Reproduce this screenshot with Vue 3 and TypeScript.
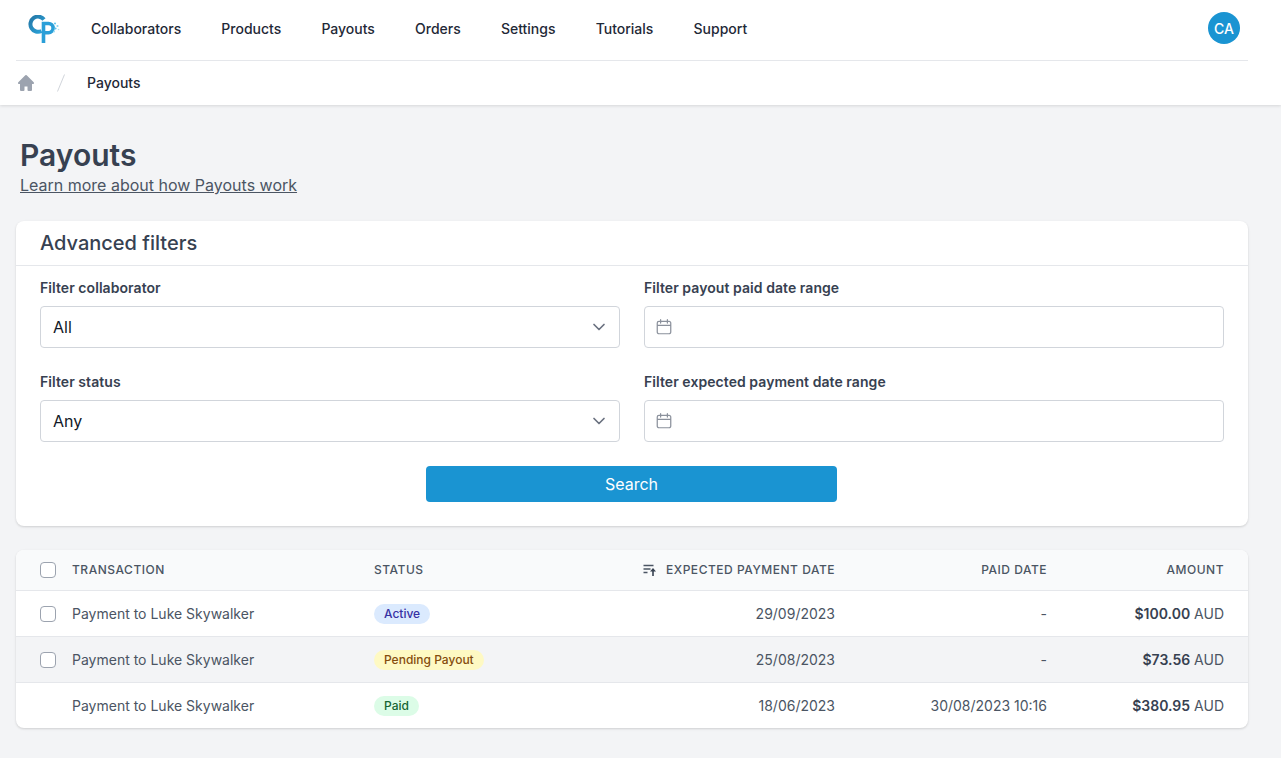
<script setup lang="ts">
interface Row { status: string; tone: string; expected: string; paid: string; amount: string; check: boolean }
const nav: string[] = ['Collaborators', 'Products', 'Payouts', 'Orders', 'Settings', 'Tutorials', 'Support']
const rows: Row[] = [
  { status: 'Active', tone: 'blue', expected: '29/09/2023', paid: '-', amount: '$100.00', check: true },
  { status: 'Pending Payout', tone: 'yellow', expected: '25/08/2023', paid: '-', amount: '$73.56', check: true },
  { status: 'Paid', tone: 'green', expected: '18/06/2023', paid: '30/08/2023 10:16', amount: '$380.95', check: false },
]
</script>

<template>
  <div class="page">
    <header class="top">
      <div class="navrow">
        <svg class="logo" viewBox="0 0 34 28" width="34" height="28" aria-label="logo">
          <defs>
            <linearGradient id="lg" x1="0" y1="0" x2="1" y2="1">
              <stop offset="0" stop-color="#2477a6" />
              <stop offset="1" stop-color="#2ba5dc" />
            </linearGradient>
          </defs>
          <path d="M17 4.5 A7.6 7.6 0 1 0 14.5 16" fill="none" stroke="url(#lg)" stroke-width="4" />
          <path d="M16.5 28 V8.5 H21.5 a4.6 4.6 0 0 1 0 9.2 H16.5" fill="none" stroke="#2a9fd8" stroke-width="3.6" />
          <circle cx="28" cy="8.5" r="1" fill="#5cc3ec" />
          <circle cx="30.5" cy="11" r="1.1" fill="#8ad6f2" />
          <circle cx="28.5" cy="13.5" r="1.1" fill="#5cc3ec" />
          <circle cx="31.5" cy="14.5" r="0.8" fill="#a9e1f6" />
          <circle cx="27" cy="16.5" r="0.9" fill="#8ad6f2" />
        </svg>
        <nav class="links">
          <a v-for="n in nav" :key="n" class="link">{{ n }}</a>
        </nav>
        <div class="avatar">CA</div>
      </div>
      <div class="crumbs">
        <svg class="home" viewBox="0 0 20 20" width="20" height="20">
          <path fill="#9ca3af" d="M10.7 2.3a1 1 0 0 0-1.4 0l-7 7A1 1 0 0 0 3 11h1v6a1 1 0 0 0 1 1h2.5a1 1 0 0 0 1-1v-3.5h3V17a1 1 0 0 0 1 1H15a1 1 0 0 0 1-1v-6h1a1 1 0 0 0 .7-1.7l-7-7z" />
        </svg>
        <svg class="slash" viewBox="0 0 10 20" width="10" height="20">
          <path d="M8.5 1.5 L1.5 18.5" stroke="#d1d5db" stroke-width="1" fill="none" />
        </svg>
        <span class="crumb">Payouts</span>
      </div>
    </header>

    <main class="main">
      <div class="heading">
        <h1>Payouts</h1>
        <a class="learn">Learn more about how Payouts work</a>
      </div>

      <section class="card filters">
        <h2>Advanced filters</h2>
        <div class="form">
          <div class="field">
            <label>Filter collaborator</label>
            <div class="control select">
              <span>All</span>
              <svg viewBox="0 0 20 20" width="20" height="20"><path d="M5 7.5 L10 12.5 L15 7.5" fill="none" stroke="#6b7280" stroke-width="1.7" stroke-linecap="round" stroke-linejoin="round" /></svg>
            </div>
          </div>
          <div class="field">
            <label>Filter payout paid date range</label>
            <div class="control date">
              <svg viewBox="0 0 16 16" width="18" height="18"><path d="M5 1.5v3M11 1.5v3M2 6.5h12M3.5 3h9A1.5 1.5 0 0 1 14 4.5v8a1.5 1.5 0 0 1-1.5 1.5h-9A1.5 1.5 0 0 1 2 12.5v-8A1.5 1.5 0 0 1 3.5 3z" fill="none" stroke="#8b919c" stroke-width="1.1" stroke-linecap="round" /></svg>
            </div>
          </div>
          <div class="field">
            <label>Filter status</label>
            <div class="control select">
              <span>Any</span>
              <svg viewBox="0 0 20 20" width="20" height="20"><path d="M5 7.5 L10 12.5 L15 7.5" fill="none" stroke="#6b7280" stroke-width="1.7" stroke-linecap="round" stroke-linejoin="round" /></svg>
            </div>
          </div>
          <div class="field">
            <label>Filter expected payment date range</label>
            <div class="control date">
              <svg viewBox="0 0 16 16" width="18" height="18"><path d="M5 1.5v3M11 1.5v3M2 6.5h12M3.5 3h9A1.5 1.5 0 0 1 14 4.5v8a1.5 1.5 0 0 1-1.5 1.5h-9A1.5 1.5 0 0 1 2 12.5v-8A1.5 1.5 0 0 1 3.5 3z" fill="none" stroke="#8b919c" stroke-width="1.1" stroke-linecap="round" /></svg>
            </div>
          </div>
        </div>
        <div class="actions"><button class="search" type="button">Search</button></div>
      </section>

      <section class="card table">
        <div class="row head">
          <div class="cell"><span class="box"></span></div>
          <div class="cell label-cell">TRANSACTION</div>
          <div class="cell label-cell">STATUS</div>
          <div class="cell end label-cell">
            <svg class="sort" viewBox="0 0 14 14" width="14" height="14"><path d="M0.5 2.5h10M0.5 6h7M0.5 9.5h4" fill="none" stroke="#4b5563" stroke-width="1.3" /><path d="M10 13V7" stroke="#374151" stroke-width="1.6" fill="none" /><path d="M7 8.5 L10 5 L13 8.5 Z" fill="#374151" /></svg>
            EXPECTED PAYMENT DATE
          </div>
          <div class="cell end label-cell">PAID DATE</div>
          <div class="cell end label-cell">AMOUNT</div>
        </div>
        <div v-for="(r, i) in rows" :key="i" class="row body" :class="{ alt: i === 1 }">
          <div class="cell"><span v-if="r.check" class="box"></span></div>
          <div class="cell">Payment to Luke Skywalker</div>
          <div class="cell"><span class="badge" :class="r.tone">{{ r.status }}</span></div>
          <div class="cell end">{{ r.expected }}</div>
          <div class="cell end">{{ r.paid }}</div>
          <div class="cell end"><strong>{{ r.amount }}</strong>&nbsp;AUD</div>
        </div>
      </section>
    </main>
  </div>
</template>

<style>
html, body { margin: 0; background: #f3f4f6; }
</style>

<style scoped>
.page {
  min-height: 758px;
  background: #f3f4f6;
  font-family: Inter, "Liberation Sans", sans-serif;
  color: #374151;
  box-sizing: border-box;
}
.top {
  background: #fff;
  height: 105px;
  padding: 0 33px 0 16px;
  box-shadow: 0 1px 3px rgba(0, 0, 0, 0.12);
  box-sizing: border-box;
}
.navrow {
  height: 61px;
  box-sizing: border-box;
  border-bottom: 1px solid #e5e7eb;
  display: flex;
  align-items: center;
  padding-right: 8px;
}
.logo { margin-left: 11px; margin-top: -2px; flex: none; }
.links { display: flex; gap: 40.15px; margin-left: 30px; flex: 1; margin-top: -2px; }
.link { font-size: 14px; font-weight: 500; color: #1f2937; line-height: 20px; }
.avatar {
  width: 32px;
  height: 32px;
  border-radius: 50%;
  background: #1a94d2;
  color: #fff;
  font-size: 14px;
  font-weight: 500;
  display: flex;
  align-items: center;
  justify-content: center;
  margin-top: -4px;
}
.crumbs { height: 44px; display: flex; align-items: center; }
.slash { margin-left: 20px; }
.crumb { margin-left: 21px; font-size: 14px; line-height: 20px; font-weight: 500; color: #1f2937; }
.main { padding: 32px 33px 30px 16px; }
.heading { padding-left: 4px; height: 84px; }
h1 { margin: 0; font-size: 30px; line-height: 36px; font-weight: 600; color: #374151; }
.learn { display: block; font-size: 16px; line-height: 24px; color: #4b5563; text-decoration: underline; }
.card {
  background: #fff;
  border-radius: 8px;
  box-shadow: 0 1px 3px rgba(0, 0, 0, 0.1), 0 1px 2px rgba(0, 0, 0, 0.06);
}
.filters { height: 305px; overflow: hidden; }
h2 {
  margin: 0;
  height: 45px;
  box-sizing: border-box;
  padding: 9px 24px 0;
  font-size: 20px;
  line-height: 26px;
  font-weight: 500;
  color: #374151;
  border-bottom: 1px solid #e5e7eb;
}
.form {
  display: grid;
  grid-template-columns: 580px 580px;
  column-gap: 24px;
  row-gap: 24px;
  padding: 12px 24px 0;
}
label { display: block; font-size: 14px; line-height: 20px; font-weight: 600; color: #374151; margin-bottom: 8px; letter-spacing: 0.06px; }
.control {
  height: 42px;
  box-sizing: border-box;
  border: 1px solid #d1d5db;
  border-radius: 4px;
  display: flex;
  align-items: center;
  background: #fff;
}
.select { justify-content: space-between; padding: 0 10px 0 12px; font-size: 16px; color: #111827; }
.date { padding-left: 10px; }
.actions { display: flex; justify-content: center; margin-top: 24px; padding-right: 1px; }
.search {
  width: 411px;
  height: 36px;
  border: 0;
  border-radius: 4px;
  background: #1a94d2;
  color: #fff;
  font: 400 16px Inter, "Liberation Sans", sans-serif;
}
.table { margin-top: 24px; overflow: hidden; }
.row {
  display: grid;
  grid-template-columns: 56px 302px 150px 311px 212px 177px;
  padding-right: 24px;
  align-items: center;
  box-sizing: border-box;
}
.row .cell:first-child { padding-left: 24px; display: flex; }
.head {
  height: 41px;
  background: #f9fafb;
  border-bottom: 1px solid #e5e7eb;
  font-size: 12px;
  font-weight: 500;
  letter-spacing: 0.52px;
  color: #4b5563;
}
.label-cell { margin-top: -2px; }
.body { height: 46px; font-size: 14px; color: #4b5563; border-bottom: 1px solid #e5e7eb; }
.body:last-child { border-bottom: 0; height: 45px; }
.alt { background: #f3f4f6; }
.end { text-align: right; }
.sort { vertical-align: -3px; margin-right: 5px; }
.box {
  box-sizing: content-box;
  width: 14px;
  height: 14px;
  border: 1px solid #9ca3af;
  border-radius: 4px;
  background: #fff;
  display: block;
}
strong { font-weight: 600; color: #374151; }
.badge {
  display: inline-block;
  font-size: 12px;
  line-height: 20px;
  font-weight: 500;
  padding: 0 10px;
  border-radius: 10px;
  vertical-align: middle;
}
.blue { background: #dbeafe; color: #3730a3; }
.yellow { background: #fef9c3; color: #854d0e; }
.green { background: #dcfce7; color: #166534; }
</style>
